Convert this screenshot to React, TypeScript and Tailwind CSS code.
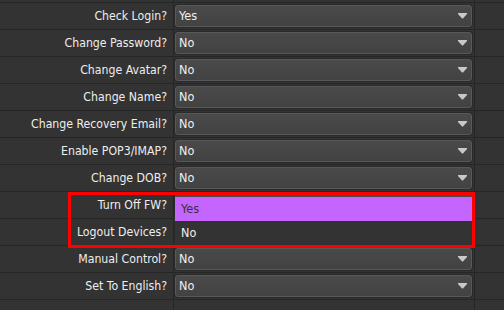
import React from "react";

const rows: [string, string, boolean][] = [
  ["Check Login?", "Yes", true],
  ["Change Password?", "No", true],
  ["Change Avatar?", "No", true],
  ["Change Name?", "No", true],
  ["Change Recovery Email?", "No", true],
  ["Enable POP3/IMAP?", "No", true],
  ["Change DOB?", "No", true],
  ["Turn Off FW?", "", true],
  ["Logout Devices?", "", true],
  ["Manual Control?", "No", true],
  ["Set To English?", "No", true],
  ["", "", false],
];

function Arrow() {
  return (
    <svg width="9" height="6" viewBox="0 0 9 6" className="shrink-0">
      <polygon points="0,0 9,0 9,1 5,5.5 4,5.5 0,1" fill="#c8c8c8" />
    </svg>
  );
}

function Select({ value }: { value: string }) {
  return (
    <div className="ml-px mr-[2px] mt-[2px] flex h-[22px] items-center justify-between rounded-[3px] border border-[#585858] bg-gradient-to-b from-[#4a4a4a] to-[#424242] pl-[3px] pr-[4px] shadow-[0_0_0_1px_#2a2a2a]">
      <span className="text-[12.5px] leading-none text-[#f0f0f0]">{value}</span>
      <Arrow />
    </div>
  );
}

export default function App() {
  return (
    <div
      className="relative h-[310px] w-[504px] overflow-hidden bg-[#333333]"
      style={{ fontFamily: '"DejaVu Sans Condensed", "Liberation Sans", Arial, sans-serif' }}
    >
      <div className="flex h-[2px]">
        <div className="w-[174px] border-r border-[#262626]" />
        <div className="w-[301px] border-r border-[#262626]" />
      </div>
      {rows.map(([label, value, hasSelect], i) => (
        <div key={i} className="flex h-[27px] border-t border-[#262626]">
          <div className="flex w-[174px] items-center justify-end border-r border-[#262626] pr-[6px] pt-px text-[12.2px] text-[#eeeeee]">
            {label}
          </div>
          <div className="w-[301px] border-r border-[#262626]">
            {hasSelect && <Select value={value} />}
          </div>
        </div>
      ))}

      {/* open dropdown list */}
      <div className="absolute left-[175px] top-[197px] flex w-[297px] flex-col bg-[#333333] text-[12.5px]">
        <div className="flex h-[24px] items-center bg-[#c466fd] pl-[6px] text-[#333333]">Yes</div>
        <div className="flex h-[24px] items-center pl-[6px] text-[#f0f0f0]">No</div>
      </div>

      {/* red annotation box */}
      <div className="pointer-events-none absolute left-[68px] top-[192px] h-[56px] w-[407px] border-[3px] border-[#ff0000]" />
    </div>
  );
}
